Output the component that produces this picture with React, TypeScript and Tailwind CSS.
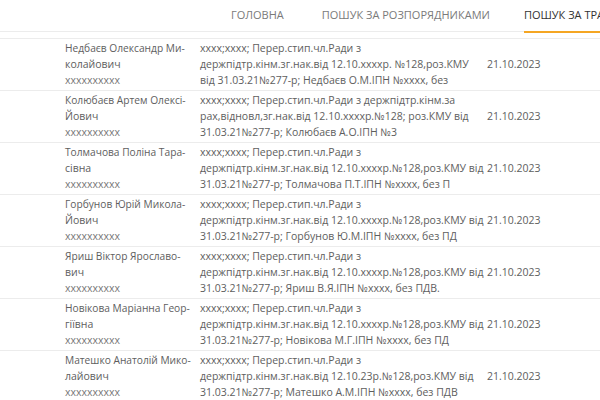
import React from "react";

type Row = { name: string[]; desc: string[] };

const rows: Row[] = [
  {
    name: ["Недбаєв Олександр Ми-", "колайович"],
    desc: [
      "xxxx;xxxx; Перер.стип.чл.Ради з",
      "держпідтр.кінм.зг.нак.від 12.10.xxxxр. №128,роз.КМУ",
      "від 31.03.21№277-р; Недбаєв О.М.ІПН №xxxx, без",
    ],
  },
  {
    name: ["Колюбаєв Артем Олексі-", "Йович"],
    desc: [
      "xxxx;xxxx; Перер.стип.чл.Ради з держпідтр.кінм.за",
      "рах,відновл,зг.нак.від 12.10.xxxxр.№128; роз.КМУ від",
      "31.03.21№277-р; Колюбаєв А.О.ІПН №3",
    ],
  },
  {
    name: ["Толмачова Поліна Тара-", "сівна"],
    desc: [
      "xxxx;xxxx; Перер.стип.чл.Ради з",
      "держпідтр.кінм.зг.нак.від 12.10.xxxxр.№128,роз.КМУ від",
      "31.03.21№277-р; Толмачова П.Т.ІПН №xxxx, без П",
    ],
  },
  {
    name: ["Горбунов Юрій Микола-", "Йович"],
    desc: [
      "xxxx;xxxx; Перер.стип.чл.Ради з",
      "держпідтр.кінм.зг.нак.від 12.10.xxxxр.№128,роз.КМУ від",
      "31.03.21№277-р; Горбунов Ю.М.ІПН №xxxx, без ПД",
    ],
  },
  {
    name: ["Яриш Віктор Ярославо-", "вич"],
    desc: [
      "xxxx;xxxx; Перер.стип.чл.Ради з",
      "держпідтр.кінм.зг.нак.від 12.10.xxxxр.№128,роз.КМУ від",
      "31.03.21№277-р; Яриш В.Я.ІПН №xxxx, без ПДВ.",
    ],
  },
  {
    name: ["Новікова Маріанна Геор-", "гіївна"],
    desc: [
      "xxxx;xxxx; Перер.стип.чл.Ради з",
      "держпідтр.кінм.зг.нак.від 12.10.xxxxр.№128,роз.КМУ від",
      "31.03.21№277-р; Новікова М.Г.ІПН №xxxx, без ПД",
    ],
  },
  {
    name: ["Матешко Анатолій Мико-", "лайович"],
    desc: [
      "xxxx;xxxx; Перер.стип.чл.Ради з",
      "держпідтр.кінм.зг.нак.від 12.10.23р.№128,роз.КМУ від",
      "31.03.21№277-р; Матешко А.М.ІПН №xxxx, без ПДВ",
    ],
  },
];

export default function App() {
  return (
    <div
      className="w-[600px] h-[400px] overflow-hidden bg-white text-[#5e5e5e]"
      style={{ fontFamily: '"Open Sans", "Noto Sans", sans-serif' }}
    >
      <div className="h-[32px] border-b border-[#ececec] flex items-center whitespace-nowrap text-[11px] text-[#7a7a7a] pl-[231px]">
        <div className="relative h-full flex items-center">ГОЛОВНА</div>
        <div className="relative h-full flex items-center ml-[38px]">ПОШУК ЗА РОЗПОРЯДНИКАМИ</div>
        <div className="relative h-full flex items-center ml-[34px] text-[#333]">
          ПОШУК ЗА ТРАНЗАКЦІЯМИ
          <span className="absolute left-0 right-0 bottom-[-2px] h-[2px] bg-[#f5a623]" />
        </div>
      </div>
      <div className="mt-[6px] border-t border-[#ececec] text-[10.5px] leading-[16px]">
        {rows.map((r, i) => (
          <div
            key={i}
            className="grid grid-cols-[65px_135px_287px_1fr] border-b border-[#ececec] pt-[1px] pb-[2px] whitespace-nowrap"
          >
            <div />
            <div>
              <div className="text-[10.2px]">{r.name[0]}</div>
              <div>{r.name[1]}</div>
              <div className="text-[#777]">xxxxxxxxxx</div>
            </div>
            <div>
              {r.desc.map((d, j) => (
                <div key={j}>{d}</div>
              ))}
            </div>
            <div className="flex items-center">21.10.2023</div>
          </div>
        ))}
      </div>
    </div>
  );
}
